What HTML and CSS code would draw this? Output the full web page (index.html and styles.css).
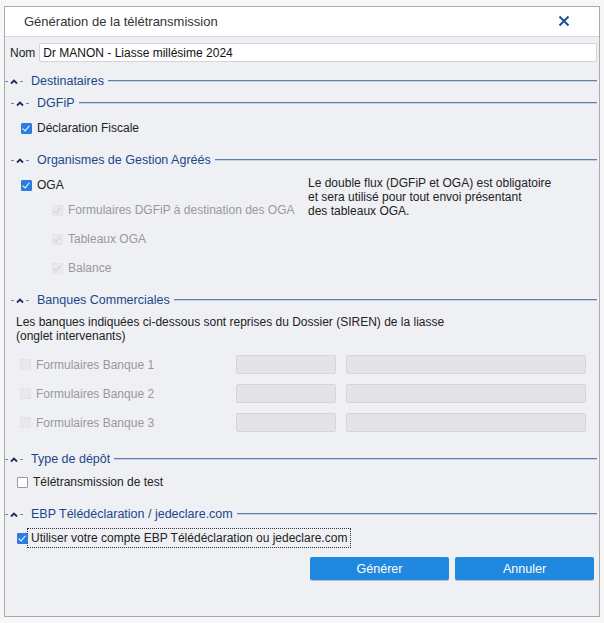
FILE: index.html
```html
<!DOCTYPE html>
<html lang="fr">
<head>
    <meta charset="UTF-8">
    <title>Génération de la télétransmission</title>
    <link rel="stylesheet" href="styles.css">
</head>
<body>
    <div class="window">
        <div class="titlebar">
            <span class="title">Génération de la télétransmission</span>
            <svg class="close" width="12" height="12" viewBox="0 0 12 12"><path d="M1.5 1.5 L10.5 10.5 M10.5 1.5 L1.5 10.5" stroke="#1f4f8f" stroke-width="2"/></svg>
        </div>
        <div class="content">
            <div class="name-row">
                <label>Nom</label>
                <input type="text" class="name-input" value="Dr MANON - Liasse millésime 2024">
            </div>

            <div class="group-head">
                <svg class="toggle" width="20" height="8" viewBox="0 0 20 8"><path d="M0 4.5 H3 M15 4.5 H18" stroke="#7386a8" stroke-width="1"/><path d="M6 6.5 L9 3.5 L12 6.5" fill="none" stroke="#1b2f5a" stroke-width="1.8"/></svg><span class="group-title">Destinataires</span><span class="rule"></span>
            </div>

            <div class="sub">
                <div class="group-head second">
                    <svg class="toggle" width="20" height="8" viewBox="0 0 20 8"><path d="M0 4.5 H3 M15 4.5 H18" stroke="#7386a8" stroke-width="1"/><path d="M6 6.5 L9 3.5 L12 6.5" fill="none" stroke="#1b2f5a" stroke-width="1.8"/></svg><span class="group-title">DGFiP</span><span class="rule"></span>
                </div>
                <div class="check-row first"><span class="box checked"></span>Déclaration Fiscale</div>

                <div class="group-head spaced">
                    <svg class="toggle" width="20" height="8" viewBox="0 0 20 8"><path d="M0 4.5 H3 M15 4.5 H18" stroke="#7386a8" stroke-width="1"/><path d="M6 6.5 L9 3.5 L12 6.5" fill="none" stroke="#1b2f5a" stroke-width="1.8"/></svg><span class="group-title">Organismes de Gestion Agréés</span><span class="rule"></span>
                </div>
                <div class="oga">
                    <div class="oga-left">
                        <div class="check-row first"><span class="box checked"></span>OGA</div>
                        <div class="check-row nested near disabled"><span class="box checked"></span>Formulaires DGFiP à destination des OGA</div>
                        <div class="check-row nested disabled"><span class="box checked"></span>Tableaux OGA</div>
                        <div class="check-row nested disabled"><span class="box checked"></span>Balance</div>
                    </div>
                    <p class="note">Le double flux (DGFiP et OGA) est obligatoire<br>et sera utilisé pour tout envoi présentant<br>des tableaux OGA.</p>
                </div>

                <div class="group-head banks">
                    <svg class="toggle" width="20" height="8" viewBox="0 0 20 8"><path d="M0 4.5 H3 M15 4.5 H18" stroke="#7386a8" stroke-width="1"/><path d="M6 6.5 L9 3.5 L12 6.5" fill="none" stroke="#1b2f5a" stroke-width="1.8"/></svg><span class="group-title">Banques Commerciales</span><span class="rule"></span>
                </div>
                <p class="info">Les banques indiquées ci-dessous sont reprises du Dossier (SIREN) de la liasse<br>(onglet intervenants)</p>
                <div class="bank-row"><span class="check-row disabled"><span class="box"></span>Formulaires Banque 1</span><span class="field short"></span><span class="field long"></span></div>
                <div class="bank-row"><span class="check-row disabled"><span class="box"></span>Formulaires Banque 2</span><span class="field short"></span><span class="field long"></span></div>
                <div class="bank-row"><span class="check-row disabled"><span class="box"></span>Formulaires Banque 3</span><span class="field short"></span><span class="field long"></span></div>
            </div>

            <div class="group-head top-gap">
                <svg class="toggle" width="20" height="8" viewBox="0 0 20 8"><path d="M0 4.5 H3 M15 4.5 H18" stroke="#7386a8" stroke-width="1"/><path d="M6 6.5 L9 3.5 L12 6.5" fill="none" stroke="#1b2f5a" stroke-width="1.8"/></svg><span class="group-title">Type de dépôt</span><span class="rule"></span>
            </div>
            <div class="check-row lvl1"><span class="box"></span>Télétransmission de test</div>

            <div class="group-head spaced2">
                <svg class="toggle" width="20" height="8" viewBox="0 0 20 8"><path d="M0 4.5 H3 M15 4.5 H18" stroke="#7386a8" stroke-width="1"/><path d="M6 6.5 L9 3.5 L12 6.5" fill="none" stroke="#1b2f5a" stroke-width="1.8"/></svg><span class="group-title">EBP Télédéclaration / jedeclare.com</span><span class="rule"></span>
            </div>
            <div class="check-row lvl1 focus-row"><span class="box checked"></span><span class="focus">Utiliser votre compte EBP Télédéclaration ou jedeclare.com</span></div>

            <div class="actions">
                <button>Générer</button>
                <button>Annuler</button>
            </div>
        </div>
    </div>
</body>
</html>
```

FILE: styles.css
```css
body {
    margin: 0;
    background: #f7f7f7;
    font-family: "Liberation Sans", Arial, sans-serif;
    font-size: 12px;
    color: #222;
}
.window {
    margin: 6px 4px 0 4px;
    width: 594px;
    height: 609px;
    border: 1px solid #a9a9b0;
    background: #eff0f4;
    display: flex;
    flex-direction: column;
}
.titlebar {
    height: 30px;
    background: white;
    border-bottom: 1px solid #d8d8de;
    display: flex;
    align-items: center;
    padding: 0 22px 0 19px;
    box-sizing: border-box;
    justify-content: space-between;
    font-size: 13px;
    color: #333;
}
.close {
    margin-right: 7px;
    margin-bottom: 2px;
}
.content {
    padding: 6px 2px 0 0;
}
.name-row {
    display: flex;
    align-items: center;
    padding-left: 5px;
    gap: 4px;
}
.name-input {
    flex: 1;
    height: 17px;
    border: 1px solid #d2d4da;
    border-radius: 2px;
    padding: 0 3px;
    font: inherit;
    font-size: 12px;
    color: #111;
    background: white;
}
.group-head {
    display: flex;
    align-items: center;
    height: 14px;
    margin-top: 12px;
    color: #1b478a;
}
.group-head.second {
    margin-top: 8px;
}
.group-head.spaced {
    margin-top: 18px;
}
.group-head.banks {
    margin-top: 18px;
}
.group-head.spaced2 {
    margin-top: 18px;
}
.group-head.top-gap {
    margin-top: 20px;
}
.toggle {
    flex: none;
    margin-right: 6px;
}
.group-title {
    font-size: 12.5px;
    white-space: nowrap;
}
.rule {
    flex: 1;
    height: 0;
    border-top: 1px solid #5e7fae;
    border-bottom: 1px solid #c6d0e2;
    margin-left: 4px;
}
.sub {
    padding-left: 6px;
}
.check-row {
    display: flex;
    align-items: center;
    height: 14px;
    gap: 5px;
    padding-left: 10px;
}
.check-row.first {
    margin-top: 11px;
}
.check-row.nested {
    padding-left: 41px;
    margin-top: 15px;
}
.check-row.nested.near {
    margin-top: 11px;
}
.check-row.disabled {
    color: #999;
}
.check-row.lvl1 {
    padding-left: 12px;
    margin-top: 9px;
}
.focus-row.lvl1 {
    margin-top: 10px;
}
.box {
    width: 9px;
    height: 9px;
    border: 1px solid #999;
    border-radius: 1px;
    background: white;
    flex: none;
    position: relative;
}
.box.checked {
    background: #2b7de0;
    border-color: #2b7de0;
}
.box.checked::after {
    content: "";
    position: absolute;
    left: 2px;
    top: 0px;
    width: 3px;
    height: 6px;
    border-right: 1.5px solid white;
    border-bottom: 1.5px solid white;
    transform: rotate(40deg);
}
.disabled .box {
    background: #e9e9ec;
    border-color: #e3e3e6;
}
.disabled .box.checked::after {
    border-color: #cfcfd4;
}
.oga {
    display: flex;
}
.oga-left {
    width: 297px;
}
.note {
    margin: 9px 0 0 0;
    line-height: 14px;
    color: #222;
}
.info {
    margin: 8px 0 12px 5px;
    line-height: 14px;
    color: #222;
}
.bank-row {
    display: flex;
    align-items: center;
    height: 19px;
    margin-bottom: 10px;
}
.bank-row .check-row {
    width: 216px;
    padding-left: 9px;
}
.field {
    height: 17px;
    background: #e4e4e6;
    border: 1px solid #d6d6da;
    border-radius: 2px;
}
.field.short {
    width: 98px;
    margin-right: 10px;
}
.field.long {
    width: 238px;
}
.focus {
    outline: 1px dotted #333;
    outline-offset: 2px;
    padding: 0 1px 0 1px;
    margin-left: -3px;
}
.actions {
    display: flex;
    justify-content: flex-end;
    gap: 6px;
    margin-top: 12px;
    padding-right: 3px;
}
button {
    width: 139px;
    height: 23px;
    background: #2188e0;
    color: white;
    border: none;
    border-radius: 2px;
    font: inherit;
    font-size: 12.5px;
    box-shadow: 0 1px 0 #b8c4d4;
}
```
